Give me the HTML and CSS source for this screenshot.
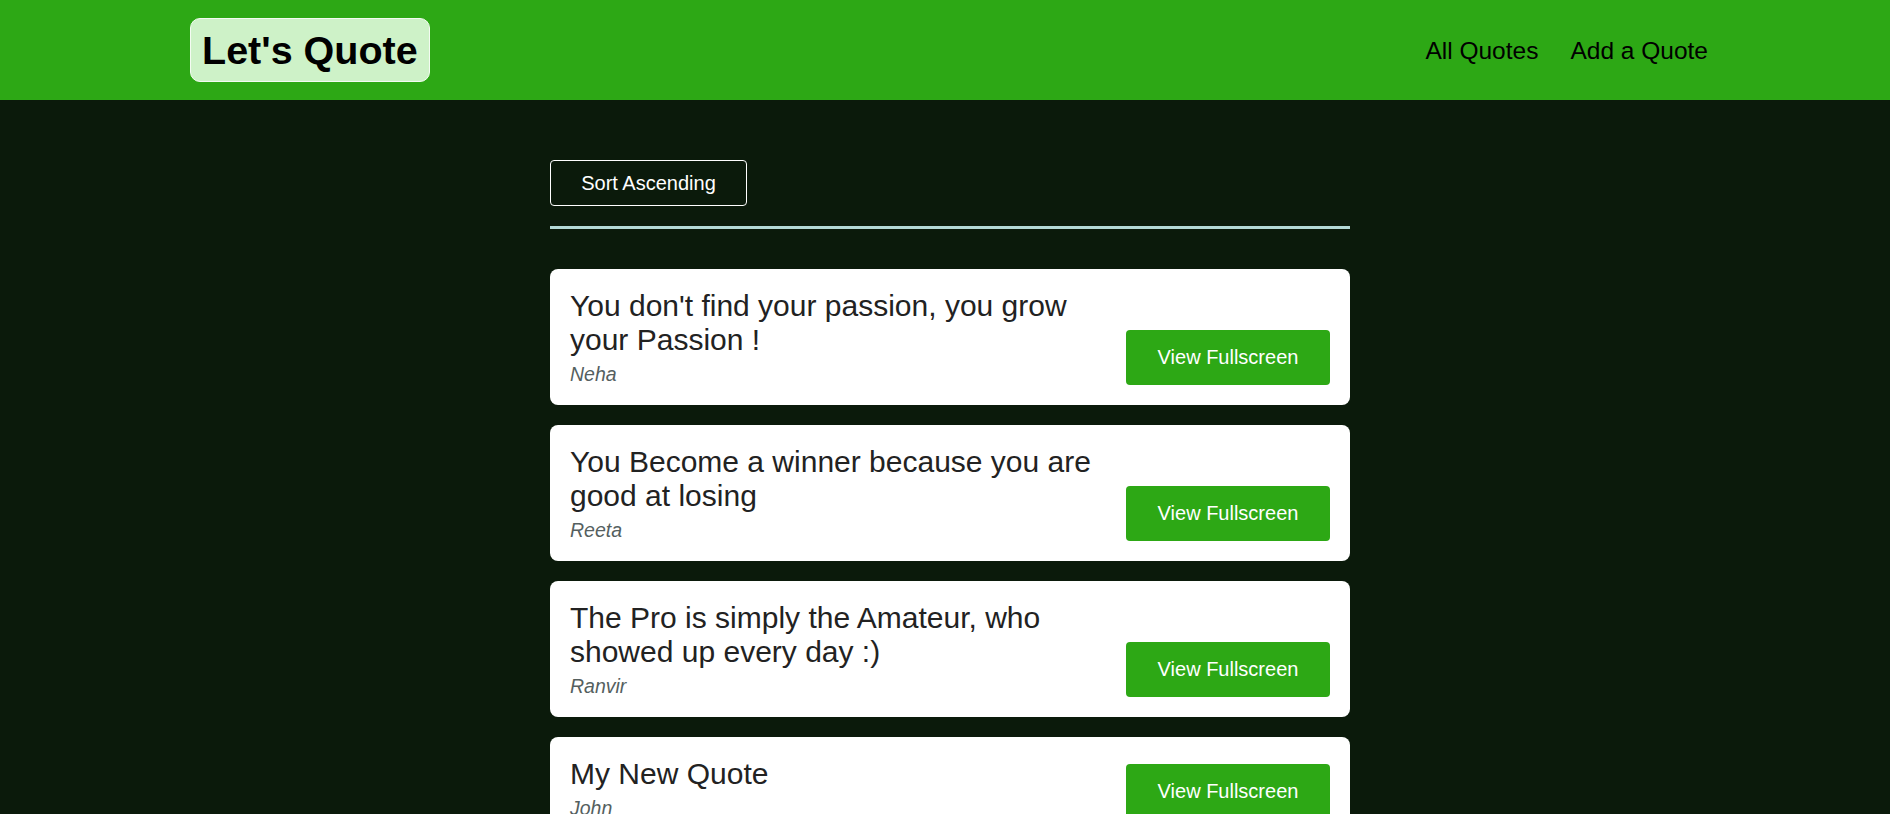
FILE: index.html
```html
<!DOCTYPE html>
<html lang="en">
<head>
<meta charset="utf-8">
<title>Let's Quote</title>
<link rel="stylesheet" href="styles.css">
</head>
<body>
<header class="header">
  <div class="logo">Let's Quote</div>
  <nav class="nav">
    <a class="nav-link" href="#">All Quotes</a>
    <a class="nav-link" href="#">Add a Quote</a>
  </nav>
</header>
<main class="main">
  <div class="sorting">
    <button class="sort-btn">Sort Ascending</button>
  </div>
  <ul class="list">
    <li class="card">
      <figure class="quote">
        <blockquote class="quote-text">You don't find your passion, you grow your Passion !</blockquote>
        <figcaption class="author">Neha</figcaption>
      </figure>
      <a class="view-btn" href="#">View Fullscreen</a>
    </li>
    <li class="card">
      <figure class="quote">
        <blockquote class="quote-text">You Become a winner because you are good at losing</blockquote>
        <figcaption class="author">Reeta</figcaption>
      </figure>
      <a class="view-btn" href="#">View Fullscreen</a>
    </li>
    <li class="card">
      <figure class="quote">
        <blockquote class="quote-text">The Pro is simply the Amateur, who showed up every day :)</blockquote>
        <figcaption class="author">Ranvir</figcaption>
      </figure>
      <a class="view-btn" href="#">View Fullscreen</a>
    </li>
    <li class="card">
      <figure class="quote">
        <blockquote class="quote-text">My New Quote</blockquote>
        <figcaption class="author">John</figcaption>
      </figure>
      <a class="view-btn" href="#">View Fullscreen</a>
    </li>
  </ul>
</main>
</body>
</html>
```

FILE: styles.css
```css
* {
  box-sizing: border-box;
}

html, body {
  margin: 0;
  padding: 0;
}

body {
  background: #0b1a0b;
  font-family: "Liberation Sans", Arial, sans-serif;
  min-height: 100vh;
}

.header {
  height: 100px;
  background: #2da815;
  display: flex;
  align-items: center;
  justify-content: space-between;
  padding: 0 182px 0 190px;
}

.logo {
  font-size: 39.5px;
  font-weight: bold;
  line-height: 46px;
  color: #000;
  background: #cef2c8;
  border: 1px solid #f4fbf2;
  border-radius: 10px;
  padding: 8px 11px 8px 11px;
}

.nav {
  display: flex;
  gap: 32px;
  padding-top: 2px;
}

.nav-link {
  font-size: 24.5px;
  color: #000;
  text-decoration: none;
}

.main {
  width: 810px;
  margin: 0 auto;
  padding: 60px 0 0 10px;
}

.sorting {
  padding-bottom: 20px;
  border-bottom: 3px solid #b3d9d6;
  margin-bottom: 40px;
}

.sort-btn {
  font-family: "Liberation Sans", Arial, sans-serif;
  font-size: 20px;
  line-height: 22px;
  color: #fff;
  background: transparent;
  border: 1px solid #fff;
  border-radius: 4px;
  padding: 11px 30px;
  width: 197px;
  height: 46px;
  cursor: pointer;
}

.list {
  list-style: none;
  margin: 0;
  padding: 0;
  display: flex;
  flex-direction: column;
  gap: 20px;
}

.card {
  background: #fff;
  border-radius: 8px;
  padding: 20px;
  display: flex;
  align-items: flex-end;
  justify-content: space-between;
  gap: 24px;
}

.quote {
  margin: 0;
  flex: 1;
}

.quote-text {
  margin: 0;
  font-size: 30px;
  line-height: 34px;
  color: #222;
}

.author {
  margin-top: 6px;
  font-size: 19.5px;
  line-height: 22px;
  font-style: italic;
  color: #555f5f;
}

.view-btn {
  flex: none;
  width: 204px;
  height: 55px;
  display: flex;
  align-items: center;
  justify-content: center;
  background: #2da815;
  color: #fff;
  font-size: 20px;
  text-decoration: none;
  border-radius: 4px;
}
```
